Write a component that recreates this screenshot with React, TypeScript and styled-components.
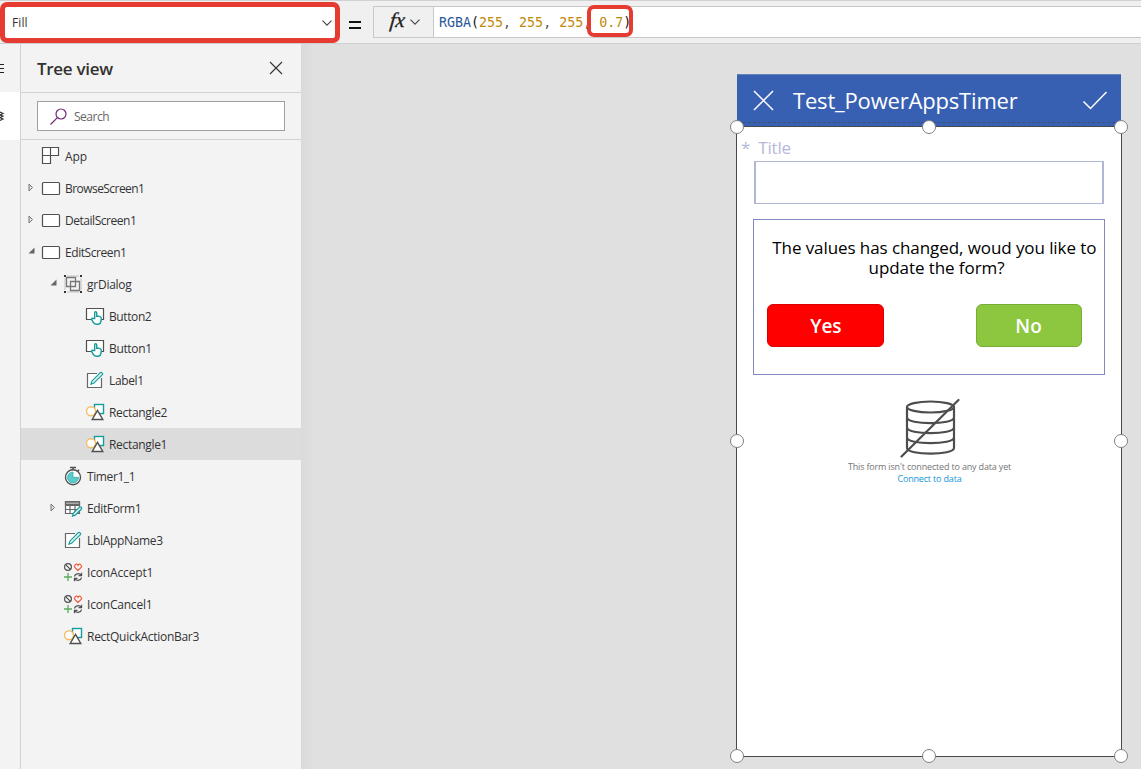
import React from 'react';
import styled, { createGlobalStyle } from 'styled-components';

const Global = createGlobalStyle`
  * { box-sizing: border-box; }
  body { margin: 0; background: #e0e0e0; overflow: hidden; font-family: "Open Sans", "Noto Sans", sans-serif; }
  svg { display: block; flex: none; overflow: visible; }
`;

const Page = styled.div`
  width: 1141px; height: 769px; display: flex; flex-direction: column; overflow: hidden;
  color: #333;
`;

const FormulaBar = styled.header`
  position: relative; height: 44px; flex: none; display: flex; align-items: flex-start;
  background: #f0f0f0; border-top: 1px solid #d2d2d2; border-bottom: 1px solid #d0d0d0;
`;
const PropertySelect = styled.div`
  width: 340px; height: 41px; margin-top: 1px; padding: 0 8px 0 7px; flex: none;
  display: flex; align-items: center; justify-content: space-between;
  background: #fff; border: 5px solid #e53b31; border-radius: 7px;
  font-size: 12px; letter-spacing: 0.1px; line-height: 18px; padding-top: 1px; color: #333;
  & > svg { margin-right: -5px; margin-top: -1px; }
`;
const Equals = styled.div`
  width: 33px; height: 42px; display: flex; align-items: center; justify-content: center;
  padding: 5px 3px 0 0;
`;
const FxButton = styled.div`
  width: 60px; height: 32px; margin-top: 5px; display: flex; align-items: center; gap: 5px; padding-left: 16px;
  border: 1px solid #c8c8c8; border-right: 0; color: #222;
`;
const FxLabel = styled.span`
  font: italic 21px/24px "Liberation Serif", serif; letter-spacing: -0.2px; margin-top: -4px;
  -webkit-text-stroke: 0.3px #222; transform: skewX(-6deg);
`;
const FormulaInput = styled.div`
  position: relative; flex: 1; height: 32px; margin-top: 5px; padding-left: 5px;
  border: 1px solid #c8c8c8; border-right: 0; background: #fff;
  font: 13.3px/32px "DejaVu Sans Mono", monospace; white-space: pre; color: #555;
`;
const Token = styled.span<{ $c: string }>`color: ${p => p.$c};`;
const Highlight = styled.div`
  position: absolute; left: 153px; top: -2px; width: 46px; height: 32px;
  border: 4.5px solid #e53b31; border-radius: 7px;
`;

const Body = styled.main`flex: 1; display: flex; min-height: 0;`;
const Rail = styled.nav`width: 20px; flex: none; background: #f3f3f3; overflow: hidden;`;
const RailItem = styled.div<{ $active?: boolean }>`
  height: 48px; display: flex; align-items: center; background: ${p => (p.$active ? '#fff' : '#f3f3f3')};
`;
const Panel = styled.aside`
  width: 281px; flex: none; background: #f3f3f3; border-left: 1px solid #d2d2d2;
`;
const PanelHead = styled.div`
  height: 49px; padding: 0 19px 0 16px; display: flex; align-items: center; justify-content: space-between;
  border-bottom: 1px solid #d2d2d2;
`;
const PanelTitle = styled.h1`
  margin: 2px 0 0; font: 600 17px/24px "Open Sans", sans-serif; letter-spacing: -0.3px; color: #323130;
`;
const SearchArea = styled.div`height: 47px; padding: 8px 16px; border-bottom: 1px solid #d2d2d2;`;
const SearchBox = styled.div`
  height: 30px; width: 248px; padding-left: 12px; display: flex; align-items: center; gap: 7px;
  border: 1px solid #a0a0a0; background: #fff; font-size: 12px; color: #666; letter-spacing: -0.5px;
`;
const Row = styled.div<{ $depth: number; $selected?: boolean }>`
  height: 32px; display: flex; align-items: center; padding-left: ${p => 6 + p.$depth * 22}px;
  background: ${p => (p.$selected ? '#dcdcdc' : 'transparent')};
`;
const Arrow = styled.div`width: 14px; height: 32px; flex: none; padding: 11px 0 0 1px;`;
const RowIcon = styled.div`width: 24px; height: 20px; flex: none; margin-top: -1px;`;
const RowLabel = styled.span<{ $ls: number }>`
  font: 12px/20px "Open Sans", sans-serif; letter-spacing: ${p => p.$ls}px; color: #333; white-space: nowrap; margin-top: 1px;
`;

const Canvas = styled.section`
  flex: 1; display: flex; justify-content: flex-end; padding: 30px 20px 0 0;
  background: linear-gradient(90deg, #dadada 0, #e0e0e0 14px);
`;
const Phone = styled.div`width: 384px; display: flex; flex-direction: column;`;
const AppBar = styled.div`
  height: 52px; flex: none; padding: 0 14px 0 16px; display: flex; align-items: center;
  background: #3860b2; border-top: 1px solid #6682bb; color: #fff;
  position: relative;
`;
const AppTitle = styled.div`flex: 1; margin: -1px 0 0 19px; font-size: 22px; line-height: 30px; letter-spacing: -0.18px;`;
const Dashes = styled.div`
  position: absolute; left: 6px; right: 6px; bottom: 3px; border-top: 1px dashed #3f4f79;
`;
const Screen = styled.div`
  position: relative; width: 386px; height: 631px; margin-left: -1px; border: 1px solid #484848;
  background: #fff; display: flex; flex-direction: column;
`;
const Handle = styled.i<{ $x: number; $y: number }>`
  position: absolute; left: calc(${p => p.$x}% - 7px); top: calc(${p => p.$y}% - ${p => (p.$y === 50 ? 7.6 : 7)}px);
  width: 14px; height: 14px; border-radius: 50%; border: 1px solid #808080; background: #fff;
`;
const FieldLabel = styled.div`
  height: 34px; padding: 10px 0 0 4px; font-size: 17px; line-height: 22px; letter-spacing: -0.15px; color: #b5b9d9; display: flex; gap: 8px;
`;
const Field = styled.div`width: 350px; height: 43px; margin-left: 17px; border: 1px solid #b0b6d6; border-width: 1px 2px;`;
const Dialog = styled.div`
  width: 352px; height: 156px; margin: 15px 0 0 16px; padding-top: 18px; border: 1px solid #8289bd;
`;
const Message = styled.p`
  margin: 0; padding-left: 15px; font-size: 17px; line-height: 20px; letter-spacing: -0.08px; color: #000; text-align: center; white-space: nowrap;
`;
const Actions = styled.div`display: flex; justify-content: space-between; padding: 26px 22.500px 0 13.400px;`;
const DialogButton = styled.button<{ $bg: string; $edge: string; $w: number }>`
  width: ${p => p.$w}px; height: 43px; padding: 0; border: 1px solid ${p => p.$edge}; border-radius: 6px;
  background: ${p => p.$bg}; color: #fff; font: 600 19px/40px "Open Sans", sans-serif;
`;
const Empty = styled.div`
  margin-top: 20px; padding-left: 1px; display: flex; flex-direction: column; align-items: center;
  font-size: 9px; line-height: 12px; letter-spacing: -0.17px; color: #747474;
  & > svg { margin-bottom: 2px; }
`;
const Link = styled.a`color: #1595dd;`;

const Chevron = ({ w = 10 }: { w?: number }) => (
  <svg width={w} height={w / 2 + 1} viewBox="0 0 10 6" fill="none" stroke="#444" strokeWidth="1.1"><path d="M.5 .7 5 5.2 9.5 .7" /></svg>
);

type Kind = 'app' | 'screen' | 'group' | 'button' | 'label' | 'shape' | 'timer' | 'form' | 'icons';

const TreeIcon = ({ kind }: { kind: Kind }) => {
  const s = '#505050', teal = '#179c9c';
  return (
    <svg width="20" height="20" viewBox="0 0 20 20" fill="none" stroke={s} strokeWidth="1.2">
      {kind === 'app' && <path d="M1.5 1.5h16v8h-8v8h-8zM9.5 1.5v8M1.5 9.5h8" fill="#fff" />}
      {kind === 'screen' && <rect x="1.5" y="4.5" width="17" height="12" rx="1" fill="#fff" />}
      {kind === 'group' && (
        <>
          <path d="M4 2h12M2 4v12M18 4v12M4 18h12" stroke="#c4c4c4" strokeWidth="1" />
          <path d="M3.500 3.500h9v9h-9zM7.500 7.500h9v9h-9z" stroke="#777" strokeWidth="1.300" />
          <path d="M1 1h2v2H1zM17 1h2v2h-2zM1 17h2v2H1zM17 17h2v2h-2z" fill="#333" stroke="none" />
        </>
      )}
      {kind === 'button' && (
        <>
          <path d="M7 13.500H1.500v-11h17v11H16" fill="#fff" />
          <path d="M9.700 12.500V6.800c0-1.400 2-1.400 2 0v3.400h1.700l2 .7c.8.300 1 .9.900 1.700l-.4 3c-.3 1.700-1.500 2.700-3.200 2.700h-1.400c-1.500 0-2.500-.8-3.200-2.100l-1.500-2.800c-.3-.8.7-1.500 1.500-.9z" stroke={teal} strokeWidth="1.400" fill="#fff" />
        </>
      )}
      {kind === 'label' && (
        <>
          <path d="M12 3.500H2.500v14h14V8" fill="#fff" stroke="#666" />
          <path d="m6 14.200.8-3 8.500-8.500c1-1 3.100.8 2.100 1.900l-8.500 8.500z" stroke={teal} fill="#d9f2f1" />
        </>
      )}
      {kind === 'shape' && (
        <>
          <rect x="9.500" y="2.500" width="9" height="9" stroke={teal} strokeWidth="1.400" fill="#fff" />
          <circle cx="6" cy="9.300" r="4.500" stroke="#f5bd66" strokeWidth="1.400" fill="#fff" />
          <path d="M12.500 8.300 17.800 17.500H7.200z" fill="#fff" strokeWidth="1.400" />
        </>
      )}
      {kind === 'timer' && (
        <>
          <circle cx="10" cy="11.300" r="7.500" fill="#fff" strokeWidth="1.400" />
          <path d="M10 6v5.300h5.500A5.500 5.500 0 1 1 10 6" fill="#5bcaca" stroke="#30afaf" strokeWidth=".8" />
          <path d="M7 1.500h6M10 1.500v2.300M14.500 5.500l1.500-1.700" strokeWidth="1.500" />
        </>
      )}
      {kind === 'form' && (
        <>
          <path d="M2.500 3.500h14v12h-14zM2.500 7.500h14M2.500 11.500h14M7 7v8.500M12 7v8.500" fill="#fff" stroke="#666" />
          <path d="M2.500 4h14v2.500h-14z" fill="#aaa" stroke="#666" />
          <path d="m9.500 18 .7-2.700 6.200-6.200c1-1 3 .8 2 1.900l-6.200 6.200z" stroke={teal} fill="#d9f2f1" />
        </>
      )}
      {kind === 'icons' && (
        <>
          <circle cx="5" cy="5" r="3.400" /><path d="m2.600 2.600 4.800 4.800" />
          <path d="M15 8.500 11.800 5.400C10.500 3.500 13.500 .6 15 3.200c1.500-2.600 4.500.3 3.200 2.200z" stroke="#f25736" />
          <path d="M5 11v8M1 15h8" stroke="#58ad59" strokeWidth="1.300" />
          <path d="M11.500 14.500c.4-3 4.700-3.800 6.500-1.400M18.500 10.800v2.900h-3M18.500 15.500c-.4 3-4.700 3.800-6.500 1.400M11.500 19.200v-2.900h3" strokeWidth="1.300" />
        </>
      )}
    </svg>
  );
};

type Node = { name: string; kind: Kind; depth: number; open?: boolean; selected?: boolean; ls?: number };
const nodes: Node[] = [
  { name: 'App', kind: 'app', depth: 0 },
  { name: 'BrowseScreen1', kind: 'screen', depth: 0, open: false, ls: -0.55 },
  { name: 'DetailScreen1', kind: 'screen', depth: 0, open: false, ls: -0.47 },
  { name: 'EditScreen1', kind: 'screen', depth: 0, open: true, ls: -0.43 },
  { name: 'grDialog', kind: 'group', depth: 1, open: true, ls: -0.25 },
  { name: 'Button2', kind: 'button', depth: 2, ls: -0.4 },
  { name: 'Button1', kind: 'button', depth: 2, ls: -0.35 },
  { name: 'Label1', kind: 'label', depth: 2, ls: -0.35 },
  { name: 'Rectangle2', kind: 'shape', depth: 2, ls: -0.32 },
  { name: 'Rectangle1', kind: 'shape', depth: 2, selected: true, ls: -0.32 },
  { name: 'Timer1_1', kind: 'timer', depth: 1, ls: -0.4 },
  { name: 'EditForm1', kind: 'form', depth: 1, open: false, ls: -0.37 },
  { name: 'LblAppName3', kind: 'label', depth: 1, ls: -0.32 },
  { name: 'IconAccept1', kind: 'icons', depth: 1 },
  { name: 'IconCancel1', kind: 'icons', depth: 1, ls: -0.2 },
  { name: 'RectQuickActionBar3', kind: 'shape', depth: 1, ls: -0.28 },
];

const handles = [[0, 0], [50, 0], [100, 0], [0, 50], [100, 50], [0, 100], [50, 100], [100, 100]];

export default function App() {
  return (
    <Page>
      <Global />
      <FormulaBar>
        <PropertySelect>Fill<Chevron /></PropertySelect>
        <Equals>
          <svg width="12" height="8" viewBox="0 0 12 8" stroke="#111" strokeWidth="2"><path d="M0 1h12M0 7h12" /></svg>
        </Equals>
        <FxButton><FxLabel>fx</FxLabel><Chevron /></FxButton>
        <FormulaInput>
          <Token $c="#2b579a">RGBA</Token><Token $c="#111">(</Token><Token $c="#c08a08">255</Token>, <Token $c="#c08a08">255</Token>, <Token $c="#c08a08">255</Token>, <Token $c="#c08a08">0.7</Token><Token $c="#111">)</Token>
          <Highlight />
        </FormulaInput>
      </FormulaBar>
      <Body>
        <Rail>
          <RailItem><svg width="5" height="10" viewBox="0 0 5 10" stroke="#222"><path d="M0 1.500h4M0 5.500h4M0 9.500h4" /></svg></RailItem>
          <RailItem $active><svg width="4" height="10" viewBox="0 0 4 10" fill="none" stroke="#333" strokeWidth="1.200"><path d="M0 1 3 2.500 0 4M0 4l3 1.200L0 6.800M0 6.500 3 8 0 9.500" /></svg></RailItem>
        </Rail>
        <Panel>
          <PanelHead>
            <PanelTitle>Tree view</PanelTitle>
            <svg width="12" height="12" viewBox="0 0 12 12" stroke="#333" strokeWidth="1.100"><path d="m0 0 12 12M12 0 0 12" /></svg>
          </PanelHead>
          <SearchArea>
            <SearchBox>
              <svg width="17" height="17" viewBox="0 0 17 17" fill="none" stroke="#742774" strokeWidth="1.200"><circle cx="11" cy="6" r="5" /><path d="M7.400 9.600.5 16.500" /></svg>
              Search
            </SearchBox>
          </SearchArea>
          {nodes.map(n => (
            <Row key={n.name} $depth={n.depth} $selected={n.selected}>
              <Arrow>
                {n.open === false && <svg width="6" height="9" viewBox="0 0 6 9" fill="#ddd" stroke="#777" ><path d="M1 1 4.500 4.500 1 8z" /></svg>}
                {n.open && <svg width="7" height="7" viewBox="0 0 7 7" fill="#666"><path d="M6.500 .5v6h-6z" /></svg>}
              </Arrow>
              <RowIcon><TreeIcon kind={n.kind} /></RowIcon>
              <RowLabel $ls={n.ls ?? -0.15}>{n.name}</RowLabel>
            </Row>
          ))}
        </Panel>
        <Canvas>
          <Phone>
            <AppBar>
              <svg width="21" height="21" viewBox="0 0 21 21" stroke="#fff" strokeWidth="1.500"><path d="m1 1 19 19M20 1 1 20" /></svg>
              <AppTitle>Test_PowerAppsTimer</AppTitle>
              <svg width="24" height="19" viewBox="0 0 24 19" fill="none" stroke="#fff" strokeWidth="1.500"><path d="m.5 10.500 7 7L23.500 1" /></svg>
              <Dashes />
            </AppBar>
            <Screen>
              <FieldLabel><span>*</span><span>Title</span></FieldLabel>
              <Field />
              <Dialog>
                <Message>The values has changed, woud you like to&nbsp;<br />update the form?</Message>
                <Actions>
                  <DialogButton $w={117} $bg="#ff0000" $edge="#d90000">Yes</DialogButton>
                  <DialogButton $w={106} $bg="#8dc63f" $edge="#79ac35">No</DialogButton>
                </Actions>
              </Dialog>
              <Empty>
                <svg width="60" height="64" viewBox="0 0 60 64" fill="none" stroke="#4d4d4d" strokeWidth="2.200">
                  <ellipse cx="30.500" cy="12" rx="23.500" ry="5.500" />
                  <path d="M7 12v41c0 7.500 47 7.500 47 0V12M7 22.500c0 7.500 47 7.500 47 0M7 32.500c0 7.500 47 7.500 47 0M7 42.500c0 7.500 47 7.500 47 0M1.500 61.500 58.500 5" strokeLinecap="round" />
                </svg>
                <span>This form isn't connected to any data yet</span>
                <Link>Connect to data</Link>
              </Empty>
              {handles.map(([x, y]) => <Handle key={`${x}-${y}`} $x={x} $y={y} />)}
            </Screen>
          </Phone>
        </Canvas>
      </Body>
    </Page>
  );
}
